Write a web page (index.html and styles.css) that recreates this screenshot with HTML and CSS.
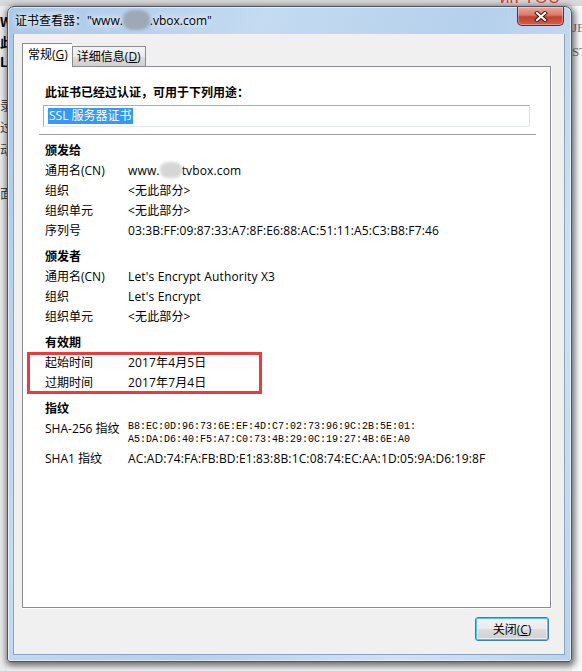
FILE: index.html
```html
<!DOCTYPE html>
<html lang="zh-CN">
<head>
  <meta charset="UTF-8" />
  <title>证书查看器</title>
  <link rel="stylesheet" href="styles.css">
</head>
<body>
  <div class="desktop">
    <div class="backdrop">
      <div class="back-top"><span class="back-red">ип YOU</span></div>
      <div class="back-side">
        <span>W</span><span>此</span><span>L</span>
        <span class="gap"></span>
        <span class="dim">录</span><span class="dim">过</span><span class="dim">动</span>
        <span class="gap"></span>
        <span class="dim">面</span>
      </div>
      <div class="back-right"><span>JE</span><span>ST</span></div>
    </div>

    <div class="window">
      <div class="titlebar">
        <span class="title">证书查看器："www.<span class="blur blur-title"></span>.vbox.com"</span>
        <button class="close-btn" aria-label="关闭">
          <svg width="14" height="11" viewBox="0 0 14 11">
            <path d="M3 2 L11 9 M11 2 L3 9" stroke="#3a1410" stroke-width="4" stroke-linecap="square"/>
            <path d="M3 2 L11 9 M11 2 L3 9" stroke="#fff" stroke-width="2.2" stroke-linecap="square"/>
          </svg>
        </button>
      </div>

      <div class="client">
        <div class="tabs">
          <div class="tab active">常规(<u>G</u>)</div>
          <div class="tab">详细信息(<u>D</u>)</div>
        </div>

        <div class="panel">
          <div class="purpose-title">此证书已经过认证，可用于下列用途：</div>
          <div class="purpose-box"><span class="selected">SSL 服务器证书</span></div>
          <div class="divider"></div>

          <div class="section">
            <div class="section-head">颁发给</div>
            <div class="row"><span class="label">通用名(CN)</span><span class="value">www.<span class="blur blur-row"></span>tvbox.com</span></div>
            <div class="row"><span class="label">组织</span><span class="value">&lt;无此部分&gt;</span></div>
            <div class="row"><span class="label">组织单元</span><span class="value">&lt;无此部分&gt;</span></div>
            <div class="row"><span class="label">序列号</span><span class="value">03:3B:FF:09:87:33:A7:8F:E6:88:AC:51:11:A5:C3:B8:F7:46</span></div>
          </div>

          <div class="section">
            <div class="section-head">颁发者</div>
            <div class="row"><span class="label">通用名(CN)</span><span class="value">Let's Encrypt Authority X3</span></div>
            <div class="row"><span class="label">组织</span><span class="value">Let's Encrypt</span></div>
            <div class="row"><span class="label">组织单元</span><span class="value">&lt;无此部分&gt;</span></div>
          </div>

          <div class="section">
            <div class="section-head">有效期</div>
            <div class="row"><span class="label">起始时间</span><span class="value">2017年4月5日</span></div>
            <div class="row"><span class="label">过期时间</span><span class="value">2017年7月4日</span></div>
          </div>

          <div class="section">
            <div class="section-head">指纹</div>
            <div class="row row-tall">
              <span class="label">SHA-256 指纹</span>
              <span class="value mono">B8:EC:0D:96:73:6E:EF:4D:C7:02:73:96:9C:2B:5E:01:<br>A5:DA:D6:40:F5:A7:C0:73:4B:29:0C:19:27:4B:6E:A0</span>
            </div>
            <div class="row"><span class="label">SHA1 指纹</span><span class="value">AC:AD:74:FA:FB:BD:E1:83:8B:1C:08:74:EC:AA:1D:05:9A:D6:19:8F</span></div>
          </div>

          <!-- red annotation drawn over the validity rows -->
          <div class="mark"></div>
        </div>

        <div class="actions">
          <button class="btn">关闭(<u>C</u>)</button>
        </div>
      </div>
    </div>
  </div>
</body>
</html>
```

FILE: styles.css
```css
body {
  margin: 0;
  font-family: "Open Sans", "Noto Sans CJK SC", sans-serif;
  font-size: 12px;
  color: #000;
  overflow: hidden;
}
.desktop {
  position: relative;
  width: 582px;
  height: 671px;
  background: #f3f3f3;
  overflow: hidden;
}

/* things of the page behind the dialog */
.backdrop {
  display: flex;
  height: 100%;
}
.back-top {
  position: absolute;
  left: 0; right: 0; top: 0;
  height: 6px;
  background: #d9d9d9;
  overflow: hidden;
}
.back-red {
  display: block;
  margin: -12px 0 0 500px;
  font: 17px "Liberation Sans", sans-serif;
  color: #e83a2e;
}
.back-side {
  width: 7px;
  padding-top: 12px;
  display: flex;
  flex-direction: column;
  overflow: hidden;
  background: #ececec;
  font: bold 13px "Noto Sans CJK SC", sans-serif;
  line-height: 20px;
}
.back-side .dim {
  font-weight: normal;
  color: #444;
  line-height: 22px;
}
.back-side .gap {
  height: 22px;
}
.back-right {
  margin-left: auto;
  width: 10px;
  padding-top: 16px;
  display: flex;
  flex-direction: column;
  overflow: hidden;
  font: 13px "Liberation Serif", serif;
  color: #777;
  line-height: 24px;
  background: #fafafa;
}

/* dialog window */
.window {
  position: absolute;
  left: 7px;
  top: 6px;
  width: 565px;
  height: 656px;
  box-sizing: border-box;
  border: 1px solid #4c5560;
  border-radius: 7px 7px 3px 3px;
  background: linear-gradient(115deg, #a9c7e6 0%, #c4dbf1 30%, #b5d0ec 55%, #cfe2f5 80%, #b9d3ee 100%);
  box-shadow: 1px 2px 6px 2px rgba(0, 0, 0, 0.55), inset 0 0 0 1px rgba(255, 255, 255, 0.55);
  display: flex;
  flex-direction: column;
  padding: 0 6px 6px 5px;
}
.titlebar {
  height: 27px;
  display: flex;
  align-items: flex-start;
  flex-shrink: 0;
}
.title {
  margin: 6px 0 0 2px;
  line-height: 16px;
  text-shadow: 0 0 6px #fff, 0 0 10px #fff;
  white-space: nowrap;
}
.blur {
  display: inline-block;
  border-radius: 40%;
  filter: blur(1.5px);
  vertical-align: middle;
}
.blur-title {
  width: 27px;
  height: 20px;
  background: #9ea9b6;
  margin-top: -4px;
}
.blur-row {
  width: 22px;
  height: 16px;
  background: #d6d6d6;
  margin-top: -3px;
}
.close-btn {
  margin-left: auto;
  margin-right: 1px;
  width: 47px;
  height: 19px;
  border: 1px solid #6e2a20;
  border-top: none;
  border-radius: 0 0 5px 5px;
  background: linear-gradient(180deg, #e9a99c 0%, #d9786a 45%, #c2412f 55%, #d0604c 100%);
  box-shadow: inset 0 0 0 1px rgba(255, 255, 255, 0.35);
  display: flex;
  align-items: center;
  justify-content: center;
  padding: 0;
}

.client {
  flex: 1;
  background: #f0f0f0;
  border: 1px solid #8da2bb;
  border-top: none;
  display: flex;
  flex-direction: column;
  padding: 9px 15px 13px 8px;
}

.tabs {
  display: flex;
  align-items: flex-end;
  height: 23px;
}
.tab {
  height: 20px;
  line-height: 19px;
  padding: 0 4px;
  border: 1px solid #898c95;
  border-bottom: none;
  background: linear-gradient(180deg, #f4f4f4 0%, #ebebeb 50%, #dddddd 51%, #cfcfcf 100%);
  color: #000;
  box-sizing: border-box;
}
.tab.active {
  position: relative;
  z-index: 1;
  height: 24px;
  margin-bottom: -1px;
  padding: 0 4px 0 5px;
  background: #fff;
  border-right: none;
  line-height: 21px;
}

.panel {
  position: relative;
  width: 529px;
  height: 542px;
  box-sizing: border-box;
  background: #fff;
  border: 1px solid #898c95;
  box-shadow: 1px 1px 0 #fff;
  padding: 16px 14px 0 16px;
}
.purpose-title {
  font-weight: bold;
  line-height: 20px;
  padding-left: 6px;
}
.purpose-box {
  margin: 2px 6px 0 4px;
  height: 22px;
  box-sizing: border-box;
  border: 1px solid #abadb3;
  border-right-color: #dbdfe6;
  border-bottom-color: #e3e9ef;
  padding: 2px 4px;
  line-height: 16px;
}
.selected {
  background: #3399ff;
  color: #fff;
  display: inline-block;
  padding: 0 1px;
}
.divider {
  margin-top: 7px;
  height: 1px;
  background: #a0a0a0;
}

.section {
  padding-left: 6px;
  margin-top: 6px;
}
.section-head {
  font-weight: bold;
  line-height: 20px;
}
.row {
  display: flex;
  line-height: 20px;
}
.label {
  width: 83px;
  flex-shrink: 0;
  white-space: nowrap;
}
.value {
  white-space: nowrap;
  letter-spacing: 0.15px;
}
.row-tall {
  height: 30px;
}
.mono {
  font: 10px "Liberation Mono", monospace;
  letter-spacing: 0;
  line-height: 13px;
  padding-top: 1px;
}

.mark {
  position: absolute;
  left: 4px;
  top: 285px;
  width: 235px;
  height: 42px;
  box-sizing: border-box;
  border: 3px solid #ef3a3a;
}

.actions {
  display: flex;
  justify-content: flex-end;
  margin-top: 9px;
}
.btn {
  width: 74px;
  height: 24px;
  font: inherit;
  border: 1px solid #3c7fb1;
  border-radius: 3px;
  background: linear-gradient(180deg, #f2f2f2 0%, #ebebeb 50%, #dddddd 51%, #cfcfcf 100%);
  box-shadow: inset 0 0 0 1px #48c6f6, inset 0 0 0 2px rgba(255, 255, 255, 0.6);
  padding: 0;
  color: #000;
}
```
